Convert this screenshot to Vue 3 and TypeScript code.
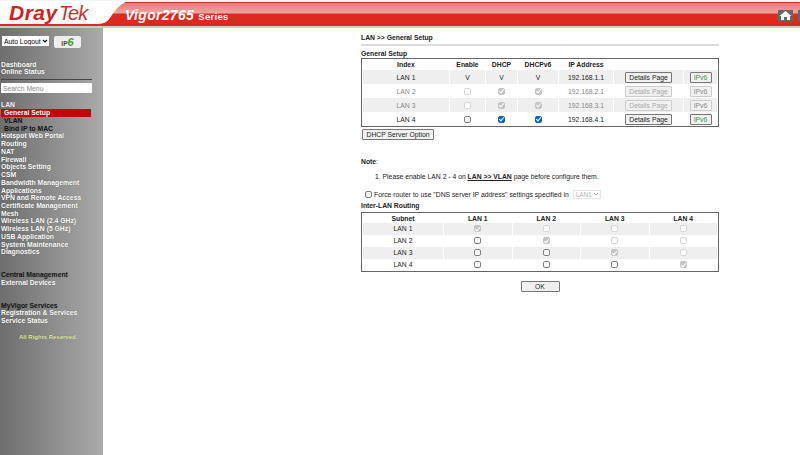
<script setup lang="ts">
type Lan = { name: string; ip: string; state: "on" | "off" | "edit" };

const menuTop = ["Dashboard", "Online Status"];
const menuMain = [
  "Hotspot Web Portal",
  "Routing",
  "NAT",
  "Firewall",
  "Objects Setting",
  "CSM",
  "Bandwidth Management",
  "Applications",
  "VPN and Remote Access",
  "Certificate Management",
  "Mesh",
  "Wireless LAN (2.4 GHz)",
  "Wireless LAN (5 GHz)",
  "USB Application",
  "System Maintenance",
  "Diagnostics",
];

const lans: Lan[] = [
  { name: "LAN 1", ip: "192.168.1.1", state: "on" },
  { name: "LAN 2", ip: "192.168.2.1", state: "off" },
  { name: "LAN 3", ip: "192.168.3.1", state: "off" },
  { name: "LAN 4", ip: "192.168.4.1", state: "edit" },
];

const subnets = ["LAN 1", "LAN 2", "LAN 3", "LAN 4"];

// own subnet is always ticked, cells above the diagonal are locked
const routeDisabled = (r: number, c: number): boolean => r <= c;
</script>

<template>
  <div class="page">
    <header class="top">
      <div class="logo">
        <span class="dray">Dray</span><span class="tek">Tek</span>
      </div>
      <div class="model">Vigor2765 <small>Series</small></div>
      <a class="home" href="#">
        <svg viewBox="0 0 15 11" width="15" height="11">
          <rect width="15" height="11" fill="#666" />
          <path d="M7.5 1 L13.5 6 L12 6 L12 10 L9 10 L9 7 L6 7 L6 10 L3 10 L3 6 L1.5 6 Z" fill="#fff" />
        </svg>
      </a>
      <span class="edge"></span>
    </header>

    <div class="body">
      <aside class="side">
        <div class="tools">
          <select class="logout"><option>Auto Logout</option></select>
          <span class="v6btn">IP<i>6</i></span>
        </div>
        <ul class="menu">
          <li v-for="m in menuTop" :key="m">{{ m }}</li>
        </ul>
        <div class="rule"></div>
        <input class="search" placeholder="Search Menu" />
        <ul class="menu lan">
          <li>LAN</li>
          <li class="sub active">General Setup</li>
          <li class="sub dark">VLAN</li>
          <li class="sub dark">Bind IP to MAC</li>
          <li v-for="m in menuMain" :key="m">{{ m }}</li>
        </ul>
        <ul class="menu central">
          <li class="dark">Central Management</li>
          <li>External Devices</li>
        </ul>
        <ul class="menu myvigor">
          <li class="dark">MyVigor Services</li>
          <li>Registration &amp; Services</li>
          <li>Service Status</li>
        </ul>
        <p class="rights">All Rights Reserved.</p>
      </aside>

      <main class="main">
        <h1 class="crumb">LAN &gt;&gt; General Setup</h1>
        <h2 class="head first">General Setup</h2>
        <table class="grid general">
          <colgroup>
            <col style="width: 86px" /><col style="width: 35px" /><col style="width: 31px" />
            <col style="width: 40px" /><col style="width: 54px" /><col style="width: 69px" /><col />
          </colgroup>
          <thead>
            <tr><th>Index</th><th>Enable</th><th>DHCP</th><th>DHCPv6</th><th>IP Address</th><th></th><th></th></tr>
          </thead>
          <tbody>
            <tr v-for="l in lans" :key="l.name" :class="{ muted: l.state === 'off' }">
              <td>{{ l.name }}</td>
              <template v-if="l.state === 'on'">
                <td>V</td><td>V</td><td>V</td>
              </template>
              <template v-else-if="l.state === 'off'">
                <td><input type="checkbox" disabled /></td>
                <td><input type="checkbox" disabled checked /></td>
                <td><input type="checkbox" disabled checked /></td>
              </template>
              <template v-else>
                <td><input type="checkbox" /></td>
                <td><input type="checkbox" checked /></td>
                <td><input type="checkbox" checked /></td>
              </template>
              <td>{{ l.ip }}</td>
              <td><button class="btn details" :disabled="l.state === 'off'">Details Page</button></td>
              <td><button class="btn v6" :disabled="l.state === 'off'">IPv6</button></td>
            </tr>
          </tbody>
        </table>
        <button class="btn option">DHCP Server Option</button>

        <p class="note"><b>Note</b>:</p>
        <p class="item">1. Please enable LAN 2 - 4 on <a href="#">LAN &gt;&gt; VLAN</a> page before configure them.</p>
        <label class="force">
          <input type="checkbox" />
          <span>Force router to use "DNS server IP address" settings specified in</span>
          <select disabled><option>LAN1</option></select>
        </label>

        <h2 class="head">Inter-LAN Routing</h2>
        <table class="grid routing">
          <colgroup>
            <col style="width: 80px" /><col /><col /><col /><col />
          </colgroup>
          <thead>
            <tr><th>Subnet</th><th v-for="s in subnets" :key="s">{{ s }}</th></tr>
          </thead>
          <tbody>
            <tr v-for="(s, r) in subnets" :key="s">
              <td>{{ s }}</td>
              <td v-for="(_, c) in subnets" :key="c">
                <input type="checkbox" :disabled="routeDisabled(r, c)" :checked="r === c" />
              </td>
            </tr>
          </tbody>
        </table>
        <div class="actions"><button class="btn ok">OK</button></div>
      </main>
    </div>
  </div>
</template>

<style scoped>
.page {
  width: 800px;
  height: 455px;
  overflow: hidden;
  font-family: "Liberation Sans", Arial, sans-serif;
  font-size: 6.8px;
  color: #222;
  background: #fff;
}

/* header */
.top {
  height: 28px;
  padding-top: 2px;
  box-sizing: border-box;
  display: flex;
  align-items: center;
  background: linear-gradient(
    #f6f6f6 0,
    #f6f6f6 2px,
    #c9322c 2px,
    #c9322c 3px,
    #e57a74 3px,
    #eda5a0 13px,
    #dc2a20 14px,
    #dc2a20 26px,
    #c9cdc8 26px
  );
}
.logo {
  width: 128px;
  height: 26px;
  margin-top: -2px;
  padding: 0 0 0 9px;
  box-sizing: border-box;
  background: #fff;
  clip-path: path("M0 0 H128 C120 3 116 8 110 17 C108 20 104 23 98 23 H0 Z");
  color: #d4201c;
  font-size: 21px;
  line-height: 23px;
  font-style: italic;
}
.dray {
  font-weight: 700;
  letter-spacing: 0.5px;
}
.tek {
  margin-left: 1px;
  font-size: 20px;
  letter-spacing: -1px;
  color: #c8342c;
}
.model {
  margin-left: -3px;
  color: #fff;
  font-size: 14px;
  font-weight: 700;
  font-style: italic;
  letter-spacing: 0.3px;
}
.model small {
  font-size: 9.5px;
  font-style: normal;
}
.home {
  display: flex;
  margin: 0 5px 0 auto;
}
.edge {
  width: 2px;
  height: 11px;
  background: #666;
}

.body {
  display: flex;
  height: 427px;
}

/* left menu */
.side {
  width: 103px;
  flex: none;
  padding: 8px 0 0 1px;
  box-sizing: border-box;
  background: linear-gradient(90deg, #6e6e6e, #aaa);
  color: #fff;
  font-weight: 700;
  text-shadow: 0 0 1px rgba(0, 0, 0, 0.45);
}
.tools {
  display: flex;
  align-items: flex-start;
  gap: 5px;
  padding-left: 1px;
}
.logout {
  appearance: none;
  width: 47px;
  height: 10px;
  padding: 0 0 0 2px;
  border: 0;
  background: #fff url("data:image/svg+xml,%3Csvg xmlns='http://www.w3.org/2000/svg' width='6' height='4'%3E%3Cpath d='M1 1l2 2 2-2' fill='none' stroke='%23000' stroke-width='1.2'/%3E%3C/svg%3E") no-repeat right 1px center;
  font: 6.8px "Liberation Sans", sans-serif;
}
.v6btn {
  width: 27px;
  height: 12px;
  line-height: 12px;
  text-align: center;
  background: #eee;
  border-radius: 2px;
  color: #444;
  font-size: 6.5px;
  text-shadow: none;
}
.v6btn i {
  color: #4a9a20;
  font-size: 11px;
}
.menu {
  list-style: none;
  margin: 0;
  padding: 0;
  line-height: 7.74px;
}
.menu:first-of-type {
  margin-top: 12.5px;
}
.rule {
  width: 91px;
  height: 1px;
  margin: 3px 0 3.5px;
  background: #444;
}
.search {
  display: block;
  width: 91px;
  height: 10px;
  padding: 0 2px;
  border: 0;
  box-sizing: border-box;
  font: 6.8px "Liberation Sans", sans-serif;
}
.search::placeholder {
  color: #888;
}
.lan {
  margin-top: 8px;
}
.sub {
  padding-left: 3px;
}
.active {
  width: 87px;
  background: #c4060c;
}
.dark {
  color: #111;
  text-shadow: none;
}
.central {
  margin-top: 15px;
}
.myvigor {
  margin-top: 15px;
}
.rights {
  margin: 9px 0 0 18px;
  font-size: 6px;
  color: #e4f0a0;
}

/* page content */
.main {
  width: 358px;
  margin-left: 258px;
  padding-top: 6px;
}
.crumb {
  margin: 0;
  height: 10px;
  line-height: 8px;
  font-size: 6.8px;
  border-bottom: 2px solid #ddd;
}
.head {
  margin: 0;
  font-size: 6.8px;
  line-height: 9px;
}
.head.first {
  margin-top: 3px;
}
.grid {
  width: 358px;
  table-layout: fixed;
  border: 1px solid #666;
  border-collapse: separate;
  border-spacing: 1px 0;
  text-align: center;
}
.grid th {
  padding: 0;
  font-weight: 700;
}
.grid td {
  padding: 0;
}
.grid input,
.force input {
  appearance: none;
  position: relative;
  display: block;
  width: 7px;
  height: 7px;
  margin: 0 auto;
  box-sizing: border-box;
  border: 1px solid #808080;
  border-radius: 2px;
  background: #fff;
}
.grid input:checked {
  border-color: #0b63ce;
  background: #0b63ce;
}
.grid input:checked::after {
  content: "";
  position: absolute;
  left: 1px;
  top: -0.5px;
  width: 2px;
  height: 4px;
  border: solid #fff;
  border-width: 0 1px 1px 0;
  transform: rotate(40deg);
}
.grid input:disabled {
  border-color: #d8d8d8;
  background: #fff;
}
.grid input:disabled:checked {
  border-color: #c4c4c4;
  background: #c4c4c4;
}
.general {
  margin-top: 0;
}
.general thead tr {
  height: 11px;
}
.general tbody tr {
  height: 14px;
}
.grid tbody tr:nth-child(odd) td {
  background: #efefef;
}
.muted td {
  color: #888;
}
.btn {
  padding: 0;
  border: 1px solid #777;
  border-radius: 1px;
  background: #f0f0f0;
  font: 6.8px "Liberation Sans", sans-serif;
  color: #222;
}
.btn:disabled {
  border-color: #ccc;
  color: #aaa;
}
.details {
  display: block;
  width: 47px;
  height: 11px;
  margin: 0 auto;
}
.v6 {
  display: block;
  width: 22px;
  height: 11px;
  margin: 0 auto;
  color: #3a9a4a;
}
.v6:disabled {
  color: #888;
}
.option {
  display: block;
  width: 72px;
  height: 11px;
  margin: 2px 0 0 1px;
}
.note {
  margin: 17px 0 0;
  line-height: 9px;
}
.item {
  margin: 6px 0 0 14px;
  line-height: 9px;
}
.item a {
  color: #222;
  font-weight: 700;
}
.force {
  display: flex;
  align-items: center;
  gap: 2px;
  height: 10px;
  margin-top: 8px;
  padding-left: 4px;
}
.force input {
  margin: 0;
}
.force select {
  appearance: none;
  width: 28px;
  height: 9px;
  margin-left: 2px;
  padding: 0 0 0 2px;
  border: 1px solid #ddd;
  background: #fff url("data:image/svg+xml,%3Csvg xmlns='http://www.w3.org/2000/svg' width='6' height='4'%3E%3Cpath d='M1 1l2 2 2-2' fill='none' stroke='%23999' stroke-width='1'/%3E%3C/svg%3E") no-repeat right 1px center;
  color: #999;
  font: 6.4px "Liberation Sans", sans-serif;
}
.force + .head {
  margin-top: 2px;
}
.routing {
  margin-top: 2px;
}
.routing thead tr {
  height: 10px;
}
.routing tbody tr {
  height: 12px;
}
.routing td {
  padding-bottom: 1px;
}
.actions {
  display: flex;
  justify-content: center;
  margin-top: 9px;
}
.ok {
  width: 39px;
  height: 11px;
}
</style>
